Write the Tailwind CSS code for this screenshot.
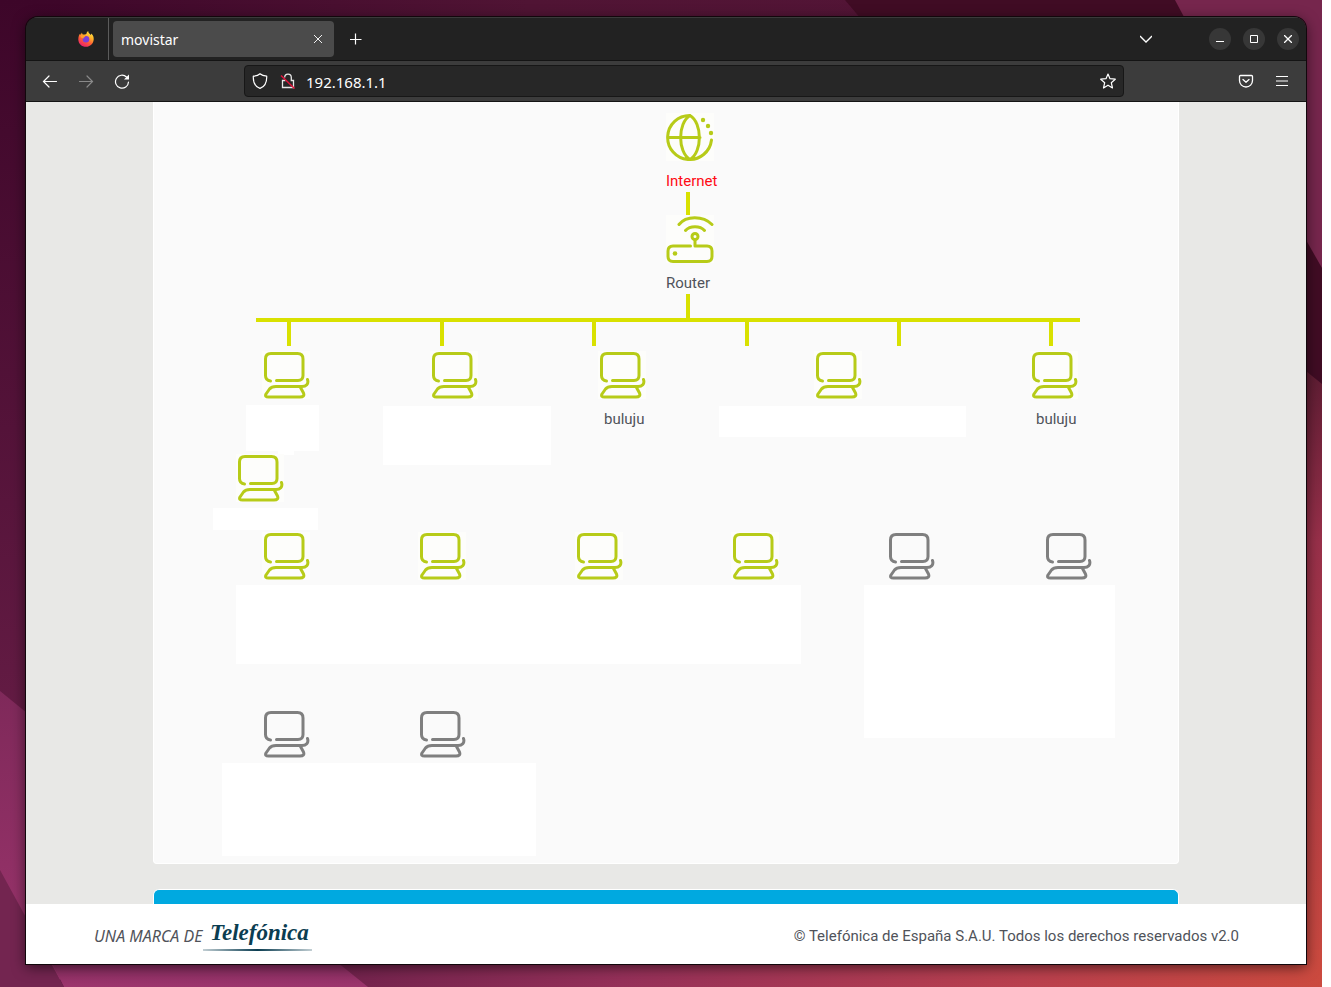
<!DOCTYPE html>
<html lang="es">
<head>
<meta charset="utf-8">
<meta name="viewport" content="width=device-width, initial-scale=1">
<title>movistar</title>
<script src="https://cdn.jsdelivr.net/npm/@tailwindcss/browser@4"></script>
</head>
<body class="flex min-h-screen bg-white pr-[9px] font-['Noto_Sans',sans-serif] text-[15px] leading-5 text-[#50535a]">

<svg class="hidden" aria-hidden="true">
  <symbol id="pc" viewBox="0 0 48 48">
    <g fill="none" stroke-width="3" stroke-linecap="round" stroke-linejoin="round">
      <path d="M8.500 30Q3.500 29.500 3.500 24.500V8Q3.500 2.500 9 2.500H35.500Q41 2.500 41 8V24.500Q41 29.500 36 29.500H14.500"/>
      <path d="M45.500 28.500C47 33 44 35.500 40 35.500H14Q9.500 35.500 7.500 38L4 43Q2.500 46 6.500 46H38Q43 46 41.500 42L38.500 36.500"/>
    </g>
  </symbol>
</svg>

<div class="relative isolate flex flex-1 flex-col overflow-hidden bg-[#4b1030] pt-[17px] pr-4 pb-[23px] pl-[26px]">
  <svg class="absolute inset-0 -z-10 h-full w-full" viewBox="0 0 1322 987" preserveAspectRatio="none" aria-hidden="true">
    <defs>
      <linearGradient id="top" x1="0" x2="1"><stop offset="0" stop-color="#3d0629"/><stop offset=".4" stop-color="#501434"/><stop offset="1" stop-color="#561538"/></linearGradient>
      <linearGradient id="left" x1="0" y1="0" x2="0" y2="1"><stop offset="0" stop-color="#3d0629"/><stop offset="1" stop-color="#681e47"/></linearGradient>
      <linearGradient id="plum" x1="0" y1="0" x2="0" y2="1"><stop offset="0" stop-color="#7f295a"/><stop offset="1" stop-color="#9c356d"/></linearGradient>
      <linearGradient id="right" x1="0" y1="0" x2="0" y2="1"><stop offset="0" stop-color="#561a30"/><stop offset=".3" stop-color="#98304a"/><stop offset="1" stop-color="#cb4a3f"/></linearGradient>
      <linearGradient id="bottom" x1="0" x2="1"><stop offset="0" stop-color="#70224c"/><stop offset=".3" stop-color="#953059"/><stop offset=".7" stop-color="#b9404e"/><stop offset="1" stop-color="#cb4a3f"/></linearGradient>
    </defs>
    <path fill="url(#top)" d="M0 0H1322V400H0Z"/>
    <path fill="url(#left)" d="M0 0H60V800H0Z"/>
    <path fill="#400c24" d="M845 0H1322V420H1200Z"/>
    <path fill="#76264d" d="M1175 0H1322V268L1306 240L1184 17Z"/>
    <path fill="url(#right)" d="M1280 350L1322 384V987H1280Z"/>
    <path fill="url(#plum)" d="M0 691L60 740V987H0Z"/>
    <path fill="#732550" d="M0 870L64 987H0Z"/>
    <path fill="url(#plum)" d="M45 950H335L375 987H64Z"/>
    <path fill="url(#bottom)" d="M322 950H1322V987H368Z"/>
  </svg>

  <div class="flex flex-1 flex-col overflow-hidden rounded-t-[12px] shadow-[0_0_0_1px_#12070c,0_3px_14px_rgba(0,0,0,.6)]">

    <!-- Tab strip -->
    <header class="flex h-11 items-center border-t border-b border-t-[#3a3a3a] border-b-[#141414] bg-[#222222] text-white">
      <div class="flex w-[83px] items-center justify-end self-stretch border-r border-[#5c5c5c] pr-3.5">
        <svg class="size-4" viewBox="0 0 16 16" aria-label="Firefox" role="img">
          <defs>
            <linearGradient id="flame" x1=".85" y1="0" x2=".3" y2="1"><stop offset="0" stop-color="#fff04a"/><stop offset=".35" stop-color="#ffb32a"/><stop offset=".65" stop-color="#ff5a36"/><stop offset="1" stop-color="#e81d6f"/></linearGradient>
          </defs>
          <path fill="url(#flame)" d="M10.200 0C10 2 12 2.600 12.400 4C13.200 3.600 13.200 3 13.200 2.600C15 4 15.900 6.200 15.700 8.500C15.400 12.700 12 15.800 8 15.800C3.800 15.800 .4 12.600 .3 8.400C.3 5.800 1.200 3.800 2.200 2.600L2.500 4L4 1.400C4 2.600 4.600 3.500 5.600 3.600C6.800 3.700 8.400 3.400 8.600 2.200C8.700 1.300 9.400 .5 10.200 0Z"/>
          <circle cx="8" cy="8.300" r="3.300" fill="#7a3fd8"/>
          <path fill="#ffa02c" d="M2.500 4.600C4 3.800 6.200 4.200 7.400 5.600C6.500 6.600 5.200 6.400 5.200 8C5 7.400 4.400 6.600 3 6.600Z"/>
        </svg>
      </div>
      <div class="ml-1 flex h-9 w-[221px] items-center justify-between rounded-[4px] bg-[#4b4b4b] px-2 text-sm">
        <span class="pt-0.5">movistar</span>
        <button aria-label="Cerrar pestaña" class="grid size-4 place-items-center"><svg class="size-2.5" viewBox="0 0 10 10" fill="none" stroke="#f0f0f0"><path d="M1 1L9 9M9 1L1 9"/></svg></button>
      </div>
      <button aria-label="Nueva pestaña" class="ml-3.5 grid size-4 place-items-center"><svg class="size-3" viewBox="0 0 12 12" fill="none" stroke="#fff" stroke-width="1.200"><path d="M5.500 .5V11.500M0 6.500H11.500"/></svg></button>
      <button aria-label="Listar pestañas" class="mr-[55px] ml-auto grid size-4 place-items-center"><svg class="size-3" viewBox="0 0 12 12" fill="none" stroke="#fff" stroke-width="1.300"><path d="M0 3L6 9L12 3"/></svg></button>
      <div class="mr-[7px] flex gap-3">
        <button aria-label="Minimizar" class="grid size-[22px] place-items-center rounded-full bg-[#373737]"><svg class="size-2" viewBox="0 0 8 8" stroke="#fff"><path d="M0 6.500H8"/></svg></button>
        <button aria-label="Maximizar" class="grid size-[22px] place-items-center rounded-full bg-[#373737]"><svg class="size-2" viewBox="0 0 8 8" fill="none" stroke="#fff"><path d="M.5 .5H7.500V7.500H.5Z"/></svg></button>
        <button aria-label="Cerrar" class="grid size-[22px] place-items-center rounded-full bg-[#373737]"><svg class="size-2" viewBox="0 0 8 8" fill="none" stroke="#fff" stroke-width="1.300"><path d="M0 0L8 8M8 0L0 8"/></svg></button>
      </div>
    </header>

    <!-- Navigation bar -->
    <nav class="flex h-[41px] items-center border-b border-[#141414] bg-[#3c3c3c] px-1.5 text-white">
      <button aria-label="Atrás" class="grid h-8 w-9 place-items-center"><svg class="size-4" viewBox="0 0 16 16" fill="none" stroke="#fff" stroke-width="1.200" stroke-linecap="round"><path d="M14.500 8.500H1.500M7 3L1.500 8.500L7 14"/></svg></button>
      <button aria-label="Adelante" class="grid h-8 w-9 place-items-center"><svg class="size-4" viewBox="0 0 16 16" fill="none" stroke="#8a8a8a" stroke-width="1.200" stroke-linecap="round"><path d="M1.500 8.500H14.500M9 3L14.500 8.500L9 14"/></svg></button>
      <button aria-label="Recargar" class="grid h-8 w-9 place-items-center"><svg class="size-4" viewBox="0 0 16 16" fill="none" stroke="#fff" stroke-width="1.200" stroke-linecap="round"><path d="M14.500 9A6.500 6.500 0 1 1 12.500 4"/><path fill="#fff" stroke="none" d="M15 1.500V6.500H10Z"/></svg></button>
      <div class="mx-[104px] flex h-8 flex-1 items-center rounded-[4px] border border-[#171717] bg-[#272727] px-[7px]">
        <svg class="size-4" viewBox="0 0 16 16" fill="none" stroke="#fff" stroke-width="1.200" stroke-linejoin="round" aria-hidden="true"><path d="M8 .8C6.500 2.200 3.700 3 1.300 3.100C1 9.500 3.200 13.700 8 15.400C12.800 13.700 15 9.500 14.700 3.100C12.300 3 9.500 2.200 8 .8Z"/></svg>
        <svg class="ml-3 size-4" viewBox="0 0 16 16" fill="none" stroke="#e8e8e8" stroke-width="1.300" aria-hidden="true"><path d="M4.700 4.500A3.300 3.300 0 0 1 11.300 4.500V7.500H13.500V14.500H2.500V7.500H5.500"/><path stroke="#e2143c" stroke-width="1.500" d="M1 2.500L14.500 15.500"/></svg>
        <input type="text" aria-label="Dirección" value="192.168.1.1" class="ml-2.5 min-w-0 flex-1 bg-transparent pt-0.5 text-white outline-none">
        <button aria-label="Añadir a marcadores" class="grid size-4 place-items-center"><svg class="size-4" viewBox="0 0 16 16" fill="none" stroke="#fff" stroke-width="1.200" stroke-linejoin="round"><path d="M8 1L10 5.700L15.300 6.200L11.300 9.700L12.500 15L8 12.200L3.500 15L4.700 9.700L.7 6.200L6 5.700Z"/></svg></button>
      </div>
      <button aria-label="Guardar en Pocket" class="grid h-8 w-9 place-items-center"><svg class="size-4" viewBox="0 0 16 16" fill="none" stroke="#fff" stroke-width="1.300" stroke-linecap="round" stroke-linejoin="round"><path d="M2.500 2.500H13.500Q14.500 2.500 14.500 3.500V7.500A6.500 6.500 0 0 1 1.500 7.500V3.500Q1.500 2.500 2.500 2.500ZM5 6.500L8 9.300L11 6.500"/></svg></button>
      <button aria-label="Menú" class="grid h-8 w-9 place-items-center"><svg class="size-3" viewBox="0 0 12 12" stroke="#fff"><path d="M0 1.500H12M0 6H12M0 10.500H12"/></svg></button>
    </nav>

    <!-- Router page -->
    <main class="flex flex-1 flex-col bg-[#e8e8e6]">
      <div class="mx-auto flex w-4/5 min-w-[1026px] flex-1 flex-col">

        <section class="rounded-b-[4px] border border-t-0 border-white bg-[#fafafa] font-['Roboto',sans-serif]" aria-label="Mapa de red">
          <!-- Network map: free canvas, nodes placed by coordinate -->
          <div class="relative mx-auto h-[761px] w-[1024px]">
            <svg class="absolute inset-0 h-full w-full" viewBox="0 0 1024 761" fill="#d9e100" aria-hidden="true">
              <path d="M532 90h4v26h-4zM532 192h4v24h-4zM102 216h824v4H102zM133 220h4v24h-4zM286 220h4v24h-4zM438 220h4v24h-4zM591 220h4v24h-4zM743 220h4v24h-4zM895 220h4v24h-4z"/>
              <path fill="#fff" d="M92 303h73v46h-73zM124 349h16v4h-16zM229 304h168v59H229zM565 304h247v31H565zM59 406h105v22H59zM82 483h565v79H82zM710 483h251v153H710zM68 661h314v93H68z"/>
            </svg>

            <div class="absolute top-[11px] left-[512px]">
              <svg class="size-12 bg-[#fdfdfb]" viewBox="0 0 48 48" fill="none" stroke="#b7cb18" stroke-width="3" stroke-linecap="round" aria-hidden="true"><path d="M45.500 27A22 22 0 1 1 24 2.500M2 24.500H34M24 2.500C11.500 10 11.500 39 24 46.500M24 2.500C36.500 10 36.500 39 24 46.500"/><g fill="#b7cb18" stroke="none"><circle cx="37" cy="7" r="2.200"/><circle cx="42" cy="13" r="2.200"/><circle cx="45" cy="20" r="2.200"/></g></svg>
              <p class="mt-2.5 text-[#ff0a14]">Internet</p>
            </div>
            <div class="absolute top-[113px] left-[512px]">
              <svg class="size-12 bg-[#fdfdfb]" viewBox="0 0 48 48" fill="none" stroke="#b7cb18" stroke-width="3" stroke-linecap="round" stroke-linejoin="round" aria-hidden="true"><path d="M24.500 31H7Q2 31 2 36V41.500Q2 46.500 7 46.500H41Q46 46.500 46 41.500V36Q46 31 41 31H29V24.500M13 9.500C20 .5 37 .5 46 9.500M19.500 15.500C24 10.500 34 10.500 38.500 15.500"/><circle cx="29" cy="21.500" r="3"/><circle cx="9" cy="38.500" r="2.300" fill="#b7cb18" stroke="none"/></svg>
              <p class="mt-2.5">Router</p>
            </div>

            <svg class="absolute top-[249px] left-[108px] size-12 bg-[#fdfdfb] stroke-[#b7cb18]"><use href="#pc"/></svg>
            <svg class="absolute top-[249px] left-[276px] size-12 bg-[#fdfdfb] stroke-[#b7cb18]"><use href="#pc"/></svg>
            <div class="absolute top-[249px] left-[444px]">
              <svg class="size-12 bg-[#fdfdfb] stroke-[#b7cb18]"><use href="#pc"/></svg>
              <p class="mt-2.5 pl-1.5">buluju</p>
            </div>
            <svg class="absolute top-[249px] left-[660px] size-12 bg-[#fdfdfb] stroke-[#b7cb18]"><use href="#pc"/></svg>
            <div class="absolute top-[249px] left-[876px]">
              <svg class="size-12 bg-[#fdfdfb] stroke-[#b7cb18]"><use href="#pc"/></svg>
              <p class="mt-2.5 pl-1.5">buluju</p>
            </div>

            <svg class="absolute top-[352px] left-[82px] size-12 bg-[#fdfdfb] stroke-[#b7cb18]"><use href="#pc"/></svg>

            <svg class="absolute top-[430px] left-[108px] size-12 bg-[#fdfdfb] stroke-[#b7cb18]"><use href="#pc"/></svg>
            <svg class="absolute top-[430px] left-[264px] size-12 bg-[#fdfdfb] stroke-[#b7cb18]"><use href="#pc"/></svg>
            <svg class="absolute top-[430px] left-[421px] size-12 bg-[#fdfdfb] stroke-[#b7cb18]"><use href="#pc"/></svg>
            <svg class="absolute top-[430px] left-[577px] size-12 bg-[#fdfdfb] stroke-[#b7cb18]"><use href="#pc"/></svg>
            <svg class="absolute top-[430px] left-[733px] size-12 stroke-[#7f7f7f]"><use href="#pc"/></svg>
            <svg class="absolute top-[430px] left-[890px] size-12 stroke-[#7f7f7f]"><use href="#pc"/></svg>

            <svg class="absolute top-[608px] left-[108px] size-12 stroke-[#7f7f7f]"><use href="#pc"/></svg>
            <svg class="absolute top-[608px] left-[264px] size-12 stroke-[#7f7f7f]"><use href="#pc"/></svg>
          </div>
        </section>

        <section class="mt-[25px] min-h-[15px] flex-1 rounded-t-[6px] border border-b-0 border-white bg-[#00a9e0]" aria-label="Sección siguiente"></section>
      </div>
    </main>

    <footer class="flex h-[60px] items-center justify-between bg-white pt-1 pr-[67px] pl-[68px]">
      <div class="flex items-center">
        <span class="text-base italic">UNA MARCA DE</span>
        <a href="#" aria-label="Telefónica" class="block">
          <svg class="-mt-1 h-9 w-[110px]" viewBox="0 0 110 36" aria-hidden="true">
            <defs><linearGradient id="rule"><stop offset="0" stop-color="#0b3d51" stop-opacity=".25"/><stop offset=".5" stop-color="#0b3d51"/><stop offset="1" stop-color="#0b3d51" stop-opacity=".25"/></linearGradient></defs>
            <text x="8" y="24" font-family="Liberation Serif, serif" font-style="italic" font-weight="700" font-size="23" fill="#0b3d51">Telefónica</text>
            <path fill="url(#rule)" d="M1 33H110V35H1Z"/>
          </svg>
        </a>
      </div>
      <p class="font-['Roboto',sans-serif]">© Telefónica de España S.A.U. Todos los derechos reservados v2.0</p>
    </footer>
  </div>
</div>
</body>
</html>
